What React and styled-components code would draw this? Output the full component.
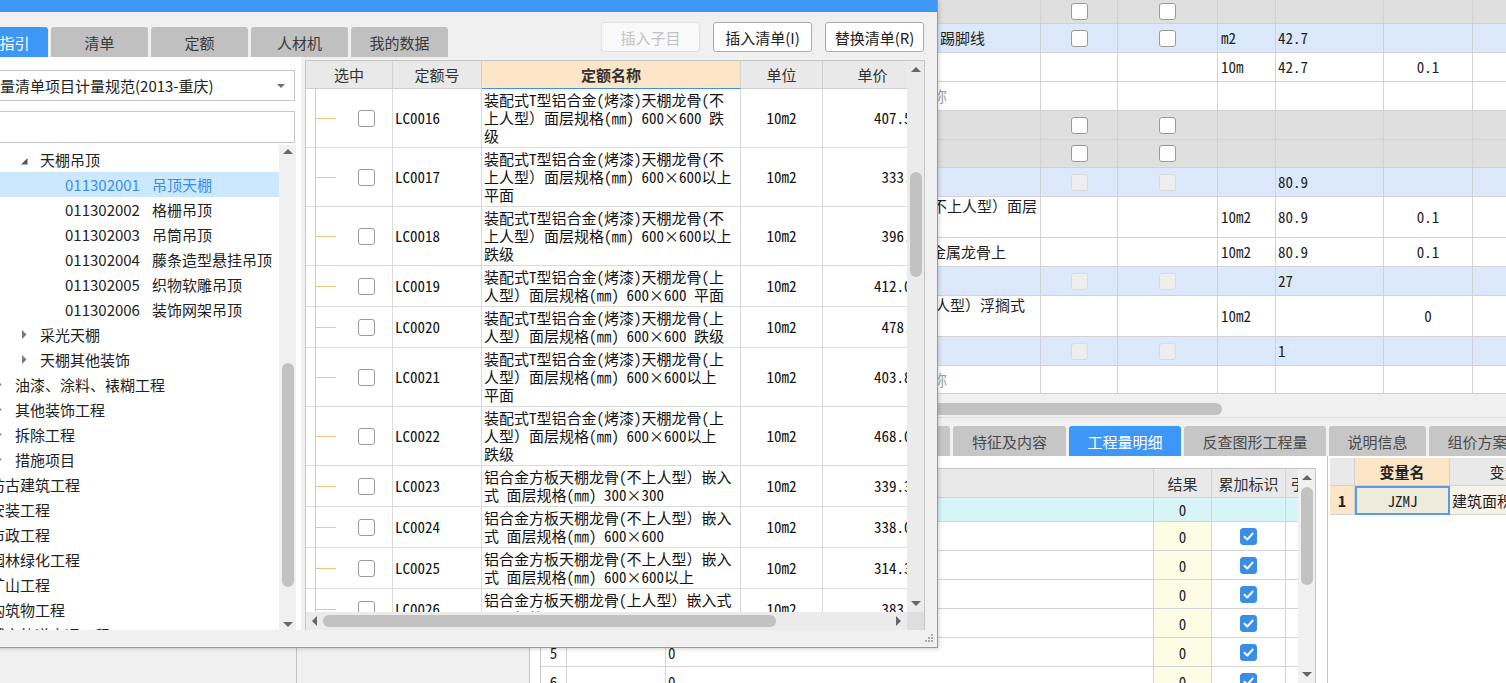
import React from 'react';
import styled, { createGlobalStyle } from 'styled-components';

const UI = '"Noto Sans CJK SC", "Noto Sans", sans-serif';
const MONO = '"Noto Sans Mono CJK SC", "Noto Sans CJK SC", monospace';

const GlobalStyle = createGlobalStyle`
  html, body { margin: 0; padding: 0; background: #ffffff; overflow: hidden; }
  *, *::before, *::after { box-sizing: border-box; }
`;

const Screen = styled.div`
  position: relative;
  display: flex;
  width: 1506px;
  height: 683px;
  overflow: hidden;
  background: #fff;
  font-family: ${UI};
  color: #222;
`;

const SidePane = styled.div`
  flex: 0 0 ${p => p.$w}px;
  background: #f0f0f0;
  border-right: 1px solid #c4c4c4;
`;

const Main = styled.div`
  flex: 1;
  min-width: 0;
  display: flex;
  flex-direction: column;
  overflow: hidden;
`;

/* ---- small shared bits ---- */
const Box = styled.span`
  display: inline-flex;
  align-items: center;
  justify-content: center;
  flex-shrink: 0;
  width: 17px;
  height: 17px;
  border-radius: 3px;
  border: 1px solid ${p => (p.$checked ? '#3a8ee6' : p.$disabled ? '#dadada' : '#9a9a9a')};
  background: ${p => (p.$checked ? '#3a8ee6' : p.$disabled ? '#eeeeee' : '#fff')};
`;

const Check = ({ on, disabled }) => (
  <Box $checked={on} $disabled={disabled}>
    {on && (
      <svg width="13" height="13" viewBox="0 0 13 13">
        <path d="M2.5 6.8 L5.3 9.5 L10.6 3.6" fill="none" stroke="#fff" strokeWidth="2" strokeLinecap="round" strokeLinejoin="round" />
      </svg>
    )}
  </Box>
);

const Tri = styled.span`
  width: 0;
  height: 0;
  border-style: solid;
  border-color: transparent;
  ${p => p.$dir === 'up' && `border-width: 0 5px 5px 5px; border-bottom-color: ${p.$c || '#666'};`}
  ${p => p.$dir === 'down' && `border-width: 5px 5px 0 5px; border-top-color: ${p.$c || '#666'};`}
  ${p => p.$dir === 'left' && `border-width: 5px 5px 5px 0; border-right-color: ${p.$c || '#666'};`}
  ${p => p.$dir === 'right' && `border-width: 5px 0 5px 5px; border-left-color: ${p.$c || '#666'};`}
`;

const VBar = styled.div`
  flex: 0 0 17px;
  display: flex;
  flex-direction: column;
  background: ${p => p.$bg || '#ebebeb'};
`;

const ArrowBox = styled.div`
  flex: 0 0 ${p => p.$h}px;
  display: flex;
  align-items: center;
  justify-content: center;
`;

const VTrack = styled.div`
  flex: 1;
  display: flex;
  flex-direction: column;
  align-items: center;
`;

const VThumb = styled.div`
  width: 12px;
  border-radius: 6px;
  background: #c2c2c2;
`;

const VScroll = ({ arrowH = 17, top, h, bg }) => (
  <VBar $bg={bg}>
    <ArrowBox $h={arrowH}><Tri $dir="up" /></ArrowBox>
    <VTrack>
      <VThumb style={{ marginTop: top, height: h }} />
    </VTrack>
    <ArrowBox $h={arrowH}><Tri $dir="down" /></ArrowBox>
  </VBar>
);

/* ---- background bill grid ---- */
const billCols = '40px 150px 194px 127px 77px 100px 58px 108px 89px 150px';

const BillGrid = styled.div`
  flex: 0 0 394px;
  overflow: hidden;
`;

const BillRow = styled.div`
  display: grid;
  grid-template-columns: ${billCols};
  width: max-content;
  height: ${p => p.$h}px;
  background: ${p => p.$bg};
`;

const BillCell = styled.div`
  display: flex;
  align-items: ${p => (p.$top ? 'flex-start' : 'center')};
  justify-content: ${p => p.$align || 'flex-start'};
  padding: 0 3px 0 ${p => (p.$pad != null ? p.$pad : 3)}px;
  border-right: 1px solid #d2d2d2;
  border-bottom: 1px solid #d2d2d2;
  font-family: ${p => (p.$mono ? MONO : UI)};
  font-size: 15px;
  line-height: 18px;
  color: ${p => (p.$muted ? '#a0a0a0' : '#1e1e1e')};
  white-space: nowrap;
  overflow: hidden;
`;

const GRAY = '#dfdfdf';
const BLUE = '#dce8fb';
const WHITE = '#ffffff';

const billRows = [
  { h: 24, bg: GRAY, cb: 'on' },
  { h: 29, bg: BLUE, name: '踢脚线', pad: 26, cb: 'on', unit: 'm2', qty: '42.7' },
  { h: 29, bg: WHITE, unit: '10m', qty: '42.7', coef: '0.1' },
  { h: 29, bg: WHITE, name: '名称', pad: 3, muted: true },
  { h: 29, bg: GRAY, cb: 'on' },
  { h: 28, bg: GRAY, cb: 'on' },
  { h: 29, bg: BLUE, cb: 'dis', qty: '80.9' },
  { h: 41, bg: WHITE, name: '不上人型）面层', pad: 18, top: true, unit: '10m2', qty: '80.9', coef: '0.1' },
  { h: 29, bg: WHITE, name: '在金属龙骨上', pad: 2, unit: '10m2', qty: '80.9', coef: '0.1' },
  { h: 29, bg: BLUE, cb: 'dis', qty: '27' },
  { h: 41, bg: WHITE, name: '上人型）浮搁式', pad: 6, top: true, unit: '10m2', coef: '0' },
  { h: 29, bg: BLUE, cb: 'dis', qty: '1' },
  { h: 28, bg: WHITE, name: '名称', pad: 3, muted: true },
];

const BillHScroll = styled.div`
  flex: 0 0 23px;
  padding-top: 9px;
  background: #f0f0f0;
`;

const HThumb = styled.div`
  height: 12px;
  border-radius: 6px;
  background: #c2c2c2;
`;

/* ---- background tabs ---- */
const TabBar = styled.div`
  flex: 0 0 39px;
  display: flex;
  align-items: flex-end;
  gap: 3px;
  padding-left: 10px;
  background: #f0f0f0;
  border-top: 1px solid #dcdcdc;
`;

const Tab = styled.div`
  flex: 0 0 ${p => p.$w}px;
  height: 30px;
  display: flex;
  align-items: center;
  justify-content: center;
  border-radius: 3px 3px 0 0;
  background: ${p => (p.$active ? '#3d97f7' : '#c6c6c6')};
  color: ${p => (p.$active ? '#fff' : '#4a4a4a')};
  font-size: 15px;
  white-space: nowrap;
`;

const bottomTabs = [
  ['工料机显示', 109], ['单价构成', 97], ['标准换算', 97], ['换算信息', 98],
  ['特征及内容', 113], ['工程量明细', 112, true], ['反查图形工程量', 142], ['说明信息', 97], ['组价方案', 97],
];

/* ---- bottom detail grid ---- */
const Bottom = styled.div`
  flex: 1;
  display: flex;
  background: #fff;
  min-height: 0;
`;

const DetailArea = styled.div`
  flex: 0 0 797px;
  width: 797px;
  min-width: 0;
  padding: 12px 11px 0 10px;
  display: flex;
`;

const DetailBox = styled.div`
  flex: 1;
  min-width: 0;
  display: flex;
  border: 1px solid #c6c6c6;
  border-bottom: none;
`;

const DetailView = styled.div`
  flex: 1;
  min-width: 0;
  overflow: hidden;
`;

const detailCols = '26px 99px 488px 58px 74px 70px';

const DetailRow = styled.div`
  display: grid;
  grid-template-columns: ${detailCols};
  width: max-content;
  height: ${p => p.$h}px;
  background: ${p => p.$bg || '#fff'};
`;

const DetailCell = styled.div`
  display: flex;
  align-items: center;
  justify-content: ${p => p.$align || 'center'};
  padding: 0 2px;
  border-right: 1px solid #d4d4d4;
  border-bottom: 1px solid #d4d4d4;
  background: ${p => p.$bg || 'transparent'};
  font-family: ${p => (p.$ui ? UI : MONO)};
  font-size: 15px;
  color: ${p => (p.$ui ? '#333' : '#1e1e1e')};
  white-space: nowrap;
  overflow: hidden;
`;

const VarPanel = styled.div`
  flex: 1;
  min-width: 0;
  padding: 2px 0 0 2px;
  border-left: 1px solid #c4c4c4;
  overflow: hidden;
`;

const VarRow = styled.div`
  display: grid;
  grid-template-columns: 25px 95px 125px;
  width: max-content;
  height: ${p => p.$h}px;
`;

const VarCell = styled.div`
  display: flex;
  align-items: center;
  justify-content: ${p => p.$align || 'center'};
  padding: 0 2px;
  background: ${p => p.$bg || '#e9e9e9'};
  border-right: 1px solid #d2d2d2;
  border-bottom: 1px solid #d2d2d2;
  ${p => p.$focus && 'border: 2px solid #5a9de6;'}
  font-family: ${p => (p.$mono ? MONO : UI)};
  font-size: 15px;
  font-weight: ${p => (p.$bold ? 700 : 400)};
  color: #222;
  white-space: nowrap;
  overflow: hidden;
`;

/* ---- dialog ---- */
const Dialog = styled.div`
  position: absolute;
  left: -55px;
  top: 0;
  width: 993px;
  height: 648px;
  display: flex;
  flex-direction: column;
  background: #f0f0f0;
  border-right: 1px solid #9a9a9a;
  border-bottom: 1px solid #9a9a9a;
  box-shadow: 1px 1px 4px rgba(0, 0, 0, 0.18);
  font-family: ${UI};
`;

const TitleBar = styled.div`
  flex: 0 0 12px;
  background: #3d97f7;
`;

const TopBar = styled.div`
  flex: 0 0 45px;
  display: flex;
  justify-content: space-between;
  padding: 0 12px 0 6px;
`;

const DlgTabs = styled.div`
  align-self: flex-end;
  display: flex;
  gap: 3px;
`;

const DlgTab = styled(Tab)`
  background: ${p => (p.$active ? '#3d97f7' : '#c0c0c0')};
  color: ${p => (p.$active ? '#fff' : '#3a3a3a')};
`;

const Buttons = styled.div`
  display: flex;
  gap: 13px;
  margin-top: 10px;
  margin-right: 1px;
`;

const Button = styled.button`
  width: 99px;
  height: 30px;
  border-radius: 3px;
  border: 1px solid ${p => (p.disabled ? '#dedede' : '#acacac')};
  background: ${p => (p.disabled ? '#f9f9f9' : '#fff')};
  color: ${p => (p.disabled ? '#c4c4c4' : '#222')};
  font-family: ${UI};
  font-size: 15px;
  padding: 0;
`;

const Content = styled.div`
  flex: 1;
  display: flex;
  padding: 0 12px 0 6px;
  min-height: 0;
`;

const LeftPanel = styled.div`
  flex: 0 0 350px;
  display: flex;
  flex-direction: column;
  background: #fff;
`;

const Field = styled.div`
  flex: 0 0 ${p => p.$h}px;
  margin: ${p => p.$mt}px 6px 0 15px;
  display: flex;
  align-items: center;
  justify-content: space-between;
  padding: 0 9px 0 3px;
  border: 1px solid #c6c6c6;
  background: #fff;
  font-size: 15px;
  color: #222;
  white-space: nowrap;
`;

const Tree = styled.div`
  flex: 1;
  display: flex;
  margin: 2px 5px 0 0;
  min-height: 0;
`;

const TreeList = styled.div`
  flex: 1;
  overflow: hidden;
  padding-top: 2px;
`;

const TreeRow = styled.div`
  display: flex;
  align-items: center;
  height: 25px;
  padding-left: ${p => 19 + (p.$level - 1) * 25}px;
  background: ${p => (p.$selected ? '#cce8ff' : 'transparent')};
  color: ${p => (p.$selected ? '#3a8ee6' : '#222')};
  font-size: 15px;
  white-space: nowrap;
`;

const Twisty = styled.span`
  flex: 0 0 20px;
  display: flex;
  align-items: center;
  padding-left: ${p => (p.$open ? 1 : 2)}px;
  padding-top: ${p => (p.$open ? 3 : 0)}px;
`;

const Code = styled.span`
  margin-right: 12px;
`;

const GridPanel = styled.div`
  flex: 1;
  margin: 3px 0 0 4px;
  display: flex;
  flex-direction: column;
  border: 1px solid #c6c6c6;
  border-bottom: none;
  background: #fff;
  min-width: 0;
`;

const GridUpper = styled.div`
  flex: 1;
  display: flex;
  min-height: 0;
`;

const GridView = styled.div`
  flex: 1;
  min-width: 0;
  overflow: hidden;
`;

const quotaCols = '87px 89px 259px 82px 100px';

const QRow = styled.div`
  display: grid;
  grid-template-columns: ${quotaCols};
  width: max-content;
`;

const QHead = styled.div`
  height: 28px;
  display: flex;
  align-items: center;
  justify-content: center;
  background: ${p => (p.$active ? '#fde5c8' : '#e9e9e9')};
  border-right: 1px solid #d0d0d0;
  border-bottom: 1px solid ${p => (p.$active ? '#3d8fe8' : '#d0d0d0')};
  font-size: 15px;
  font-weight: ${p => (p.$active ? 700 : 400)};
  color: #333;
`;

const QCell = styled.div`
  display: flex;
  flex-direction: column;
  justify-content: center;
  align-items: ${p => p.$align || 'flex-start'};
  padding: 2px ${p => (p.$align === 'flex-end' ? 3 : 2)}px 2px 2px;
  border-right: 1px solid #dadada;
  border-bottom: 1px solid #dadada;
  font-family: ${MONO};
  font-size: 15px;
  line-height: 18px;
  color: #111;
  white-space: nowrap;
  overflow: hidden;
`;

const PickCell = styled.div`
  display: flex;
  align-items: center;
  border-right: 1px solid #dadada;
  border-bottom: 1px solid #dadada;
`;

const Connector = styled.div`
  align-self: stretch;
  flex: 0 0 21px;
  margin-left: 9px;
  margin-right: 22px;
  display: flex;
  align-items: center;
  border-left: 1px solid #f8c57c;
  &::after {
    content: '';
    width: 20px;
    height: 1px;
    background: #f8c57c;
  }
`;

const HBar = styled.div`
  flex: 0 0 18px;
  display: flex;
  background: #ebebeb;
`;

const HArrow = styled.div`
  flex: 0 0 17px;
  display: flex;
  align-items: center;
  justify-content: center;
`;

const HTrack = styled.div`
  flex: 1;
  padding-top: 3px;
`;

const Corner = styled.div`
  flex: 0 0 17px;
  background: #dedede;
`;

const Footer = styled.div`
  flex: 0 0 17px;
  display: flex;
  justify-content: flex-end;
  align-items: flex-end;
  padding: 0 4px 5px 0;
`;

const treeRows = [
  { lv: 3, open: true, text: '天棚吊顶' },
  { lv: 4, code: '011302001', text: '吊顶天棚', sel: true },
  { lv: 4, code: '011302002', text: '格栅吊顶' },
  { lv: 4, code: '011302003', text: '吊筒吊顶' },
  { lv: 4, code: '011302004', text: '藤条造型悬挂吊顶' },
  { lv: 4, code: '011302005', text: '织物软雕吊顶' },
  { lv: 4, code: '011302006', text: '装饰网架吊顶' },
  { lv: 3, closed: true, text: '采光天棚' },
  { lv: 3, closed: true, text: '天棚其他装饰' },
  { lv: 2, closed: true, text: '油漆、涂料、裱糊工程' },
  { lv: 2, closed: true, text: '其他装饰工程' },
  { lv: 2, closed: true, text: '拆除工程' },
  { lv: 2, closed: true, text: '措施项目' },
  { lv: 1, closed: true, text: '仿古建筑工程' },
  { lv: 1, closed: true, text: '安装工程' },
  { lv: 1, closed: true, text: '市政工程' },
  { lv: 1, closed: true, text: '园林绿化工程' },
  { lv: 1, closed: true, text: '矿山工程' },
  { lv: 1, closed: true, text: '构筑物工程' },
  { lv: 1, closed: true, text: '城市轨道交通工程' },
];

const A = '装配式T型铝合金(烤漆)天棚龙骨(不';
const B = '装配式T型铝合金(烤漆)天棚龙骨(上';
const C = '铝合金方板天棚龙骨(不上人型）嵌入';

const quotas = [
  { code: 'LC0016', lines: [A, '上人型）面层规格(㎜) 600×600 跌', '级'], price: '407.59' },
  { code: 'LC0017', lines: [A, '上人型）面层规格(㎜) 600×600以上', '平面'], price: '333.7' },
  { code: 'LC0018', lines: [A, '上人型）面层规格(㎜) 600×600以上', '跌级'], price: '396.2' },
  { code: 'LC0019', lines: [B, '人型）面层规格(㎜) 600×600 平面'], price: '412.06' },
  { code: 'LC0020', lines: [B, '人型）面层规格(㎜) 600×600 跌级'], price: '478.1' },
  { code: 'LC0021', lines: [B, '人型）面层规格(㎜) 600×600以上', '平面'], price: '403.85' },
  { code: 'LC0022', lines: [B, '人型）面层规格(㎜) 600×600以上', '跌级'], price: '468.09' },
  { code: 'LC0023', lines: [C, '式 面层规格(㎜) 300×300'], price: '339.32' },
  { code: 'LC0024', lines: [C, '式 面层规格(㎜) 600×600'], price: '338.06' },
  { code: 'LC0025', lines: [C, '式 面层规格(㎜) 600×600以上'], price: '314.37' },
  { code: 'LC0026', lines: ['铝合金方板天棚龙骨(上人型）嵌入式', '面层规格(㎜) 300×300'], price: '383.5' },
];

const Grip = () => (
  <svg width="8" height="8" viewBox="0 0 8 8">
    {[[6, 0], [3, 3], [6, 3], [0, 6], [3, 6], [6, 6]].map(([x, y]) => (
      <rect key={`${x}-${y}`} x={x} y={y} width="2" height="2" fill="#a9a9a9" />
    ))}
  </svg>
);

const OpenArrow = () => (
  <svg width="7" height="7" viewBox="0 0 7 7"><polygon points="6.5,0 6.5,6.5 0,6.5" fill="#595959" /></svg>
);

const ClosedArrow = () => (
  <svg width="5" height="9" viewBox="0 0 5 9"><polygon points="0,0 4.5,4.5 0,9" fill="#7a7a7a" /></svg>
);

const QuotaDialog = () => (
  <Dialog>
    <TitleBar />
    <TopBar>
      <DlgTabs>
        {['清单指引', '清单', '定额', '人材机', '我的数据'].map((t, i) => (
          <DlgTab key={t} $w={97} $active={i === 0}>{t}</DlgTab>
        ))}
      </DlgTabs>
      <Buttons>
        <Button disabled>插入子目</Button>
        <Button>插入清单(I)</Button>
        <Button>替换清单(R)</Button>
      </Buttons>
    </TopBar>
    <Content>
      <LeftPanel>
        <Field $h={31} $mt={13}>
          <span>工程量清单项目计量规范(2013-重庆)</span>
          <Tri $dir="down" $c="#707070" style={{ borderWidth: '4px 4px 0 4px' }} />
        </Field>
        <Field $h={32} $mt={10} />
        <Tree>
          <TreeList>
            {treeRows.map(r => (
              <TreeRow key={r.text} $level={r.lv} $selected={r.sel}>
                <Twisty $open={r.open}>
                  {r.open && <OpenArrow />}
                  {r.closed && <ClosedArrow />}
                </Twisty>
                {r.code && <Code>{r.code}</Code>}
                <span>{r.text}</span>
              </TreeRow>
            ))}
          </TreeList>
          <VScroll arrowH={12} top={206} h={224} bg="#f0f0f0" />
        </Tree>
      </LeftPanel>
      <GridPanel>
        <GridUpper>
          <GridView>
            <QRow>
              <QHead>选中</QHead>
              <QHead>定额号</QHead>
              <QHead $active>定额名称</QHead>
              <QHead>单位</QHead>
              <QHead>单价</QHead>
            </QRow>
            {quotas.map(q => (
              <QRow key={q.code}>
                <PickCell>
                  <Connector />
                  <Check />
                </PickCell>
                <QCell>{q.code}</QCell>
                <QCell>
                  {q.lines.map((l, i) => <span key={i}>{l}</span>)}
                </QCell>
                <QCell $align="center">10m2</QCell>
                <QCell $align="flex-end">{q.price}</QCell>
              </QRow>
            ))}
          </GridView>
          <VScroll top={94} h={105} />
        </GridUpper>
        <HBar>
          <HArrow><Tri $dir="left" /></HArrow>
          <HTrack><HThumb style={{ width: 453 }} /></HTrack>
          <HArrow><Tri $dir="right" /></HArrow>
          <Corner />
        </HBar>
      </GridPanel>
    </Content>
    <Footer><Grip /></Footer>
  </Dialog>
);

const App = () => (
  <Screen>
    <GlobalStyle />
    <SidePane $w={297} />
    <SidePane $w={233} />
    <Main>
      <BillGrid>
        {billRows.map((r, i) => (
          <BillRow key={i} $h={r.h} $bg={r.bg}>
            <BillCell />
            <BillCell />
            <BillCell />
            <BillCell $pad={r.pad} $top={r.top} $muted={r.muted}>{r.name}</BillCell>
            <BillCell $align="center">{r.cb && <Check disabled={r.cb === 'dis'} />}</BillCell>
            <BillCell $align="center">{r.cb && <Check disabled={r.cb === 'dis'} />}</BillCell>
            <BillCell $mono>{r.unit}</BillCell>
            <BillCell $mono $pad={2}>{r.qty}</BillCell>
            <BillCell $mono $align="center">{r.coef}</BillCell>
            <BillCell />
          </BillRow>
        ))}
      </BillGrid>
      <BillHScroll>
        <HThumb style={{ marginLeft: 15, width: 677 }} />
      </BillHScroll>
      <TabBar>
        {bottomTabs.map(([t, w, active]) => (
          <Tab key={t} $w={w} $active={active}>{t}</Tab>
        ))}
      </TabBar>
      <Bottom>
        <DetailArea>
          <DetailBox>
            <DetailView>
              <DetailRow $h={29} $bg="#e9e9e9">
                <DetailCell $ui />
                <DetailCell $ui>名称</DetailCell>
                <DetailCell $ui>计算式</DetailCell>
                <DetailCell $ui>结果</DetailCell>
                <DetailCell $ui>累加标识</DetailCell>
                <DetailCell $ui>引用代码</DetailCell>
              </DetailRow>
              <DetailRow $h={24} $bg="#d9f4f6">
                <DetailCell />
                <DetailCell />
                <DetailCell $align="flex-start">0</DetailCell>
                <DetailCell>0</DetailCell>
                <DetailCell />
                <DetailCell />
              </DetailRow>
              {[1, 2, 3, 4, 5, 6].map(n => (
                <DetailRow key={n} $h={29}>
                  <DetailCell>{n}</DetailCell>
                  <DetailCell />
                  <DetailCell $align="flex-start">0</DetailCell>
                  <DetailCell $bg="#fdfde6">0</DetailCell>
                  <DetailCell><Check on /></DetailCell>
                  <DetailCell />
                </DetailRow>
              ))}
            </DetailView>
            <VScroll top={1} h={98} bg="#f0f0f0" />
          </DetailBox>
        </DetailArea>
        <VarPanel>
          <VarRow $h={28}>
            <VarCell />
            <VarCell $bg="#fde5c8" $bold>变量名</VarCell>
            <VarCell>变量值</VarCell>
          </VarRow>
          <VarRow $h={29}>
            <VarCell $bg="#fde5c8" $bold>1</VarCell>
            <VarCell $bg="#eeeadc" $mono $focus>JZMJ</VarCell>
            <VarCell $bg="#f6f4ea" $align="flex-start">建筑面积</VarCell>
          </VarRow>
        </VarPanel>
      </Bottom>
    </Main>
    <QuotaDialog />
  </Screen>
);

export default App;
